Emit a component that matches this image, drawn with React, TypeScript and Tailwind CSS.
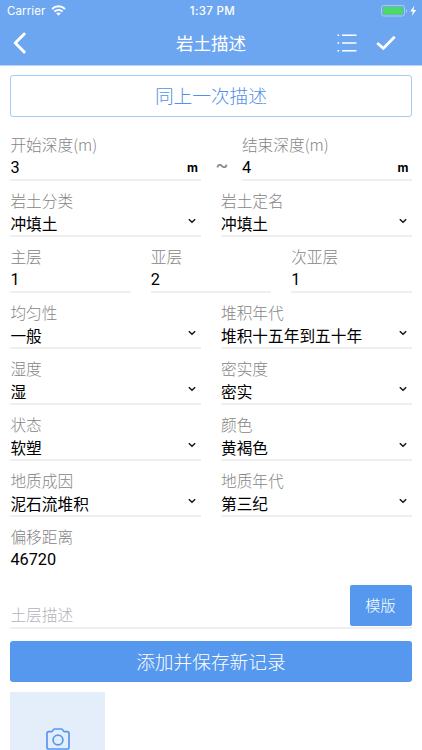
import type { ReactNode } from 'react';
import clsx from 'clsx';

interface FieldProps {
  label: string;
  value: string;
  kind?: 'select' | 'unit' | 'plain';
  numeric?: boolean;
  underline?: boolean;
  className?: string;
}

interface SelectRow {
  left: [string, string];
  right: [string, string];
}

const selectRows: SelectRow[] = [
  { left: ['均匀性', '一般'], right: ['堆积年代', '堆积十五年到五十年'] },
  { left: ['湿度', '湿'], right: ['密实度', '密实'] },
  { left: ['状态', '软塑'], right: ['颜色', '黄褐色'] },
  { left: ['地质成因', '泥石流堆积'], right: ['地质年代', '第三纪'] },
];

function ChevronDown() {
  return (
    <svg width="8" height="6" viewBox="0 0 8 6" fill="none" className="mr-[5px] mb-[7px] shrink-0">
      <path d="M0.8 1.2L4 4.3L7.2 1.2" stroke="#111" strokeWidth="1.4" />
    </svg>
  );
}

function Field({ label, value, kind = 'plain', numeric = false, underline = true, className }: FieldProps) {
  return (
    <div className={clsx('flex h-14 min-w-0 flex-col border-b-2', underline ? 'border-[#efefef]' : 'border-transparent', className)}>
      <span className="mt-[9px] h-[22px] text-[15.7px] leading-[22px] font-light whitespace-nowrap text-[#858585]">{label}</span>
      <div className="mt-px flex h-[22px] items-center justify-between">
        <span
          className={clsx(
            'whitespace-nowrap text-black',
            numeric ? "font-['Roboto',sans-serif] text-[16.3px] leading-[22px]" : 'text-[15.7px] leading-[22px]',
          )}
        >
          {value}
        </span>
        {kind === 'select' && <ChevronDown />}
        {kind === 'unit' && <span className="mr-[3px] font-['Inter',sans-serif] text-[12px] font-bold text-black">m</span>}
      </div>
    </div>
  );
}

function Row({ children }: { children: ReactNode }) {
  return <div className="flex gap-5">{children}</div>;
}

function StatusBar() {
  return (
    <div className="grid h-[22px] grid-cols-3 items-center pr-[5px] pl-[7px] font-['Inter',sans-serif] text-[11.5px] text-white">
      <div className="flex items-center gap-[6px]">
        <span className="pt-[2px] tracking-[0.1px]">Carrier</span>
        <svg width="15" height="11" viewBox="0 0 15 11" fill="none" stroke="white" strokeWidth="2" className="mb-px">
          <path d="M1 3.9C4.8 0.4 10.2 0.4 14 3.9" />
          <path d="M3.4 6.5C5.8 4.4 9.2 4.4 11.6 6.5" />
          <path d="M7.5 10.7L5.2 8.3C6.5 7.1 8.5 7.1 9.8 8.3Z" fill="white" stroke="none" />
        </svg>
      </div>
      <span className="pt-[2px] pr-px pl-[2px] text-center font-medium tracking-[0.35px]">1:37 PM</span>
      <div className="flex items-center justify-end">
        <svg width="36" height="12" viewBox="0 0 36 12" fill="none">
          <rect x="0.5" y="0.5" width="23" height="10.5" rx="2.2" stroke="#a9cbf6" />
          <rect x="2" y="2" width="20" height="7.5" rx="1" fill="#4cd964" />
          <path d="M25 4V8C26.5 7.5 26.5 4.5 25 4Z" fill="#a9cbf6" />
          <path d="M33.3 0.8L29.2 6.5H31.9L30.9 10.8L35.2 4.9H32.5Z" fill="white" />
        </svg>
      </div>
    </div>
  );
}

function NavBar() {
  return (
    <div className="grid h-[43px] grid-cols-3 items-center text-white">
      <svg width="15" height="24" viewBox="0 0 15 24" fill="none" className="mb-px ml-3">
        <path d="M12.2 3L3.2 12L12.2 21" stroke="white" strokeWidth="3" strokeLinecap="round" strokeLinejoin="round" />
      </svg>
      <h1 className="pb-px text-center text-[17.5px] font-normal">岩土描述</h1>
      <div className="flex items-center justify-end gap-[19px] pr-[26px] pb-px">
        <svg width="20" height="20" viewBox="0 0 20 20" stroke="white" strokeWidth="1.5">
          <path d="M0.5 2.2H2.2M5 2.2H19.5M0.5 10H2.2M5 10H19.5M0.5 17.8H2.2M5 17.8H19.5" />
        </svg>
        <svg width="20" height="16" viewBox="0 0 20 16" fill="none">
          <path d="M1.2 8L7.3 13.4L18.7 1.8" stroke="white" strokeWidth="2.8" />
        </svg>
      </div>
    </div>
  );
}

function CameraIcon() {
  return (
    <svg width="24" height="22" viewBox="0 0 24 22" fill="none" stroke="#5598ee" strokeWidth="1.7" strokeLinejoin="round">
      <path d="M2.8 3.7H5.7C6.8 3.7 7.1 1 8.3 1H15.7C16.9 1 17.2 3.7 18.3 3.7H21.2C22.2 3.7 23 4.5 23 5.5V19.2C23 20.2 22.2 21 21.2 21H2.8C1.8 21 1 20.2 1 19.2V5.5C1 4.5 1.8 3.7 2.8 3.7Z" />
      <circle cx="12" cy="12" r="4.9" />
    </svg>
  );
}

export default function App() {
  return (
    <div className="h-[750px] w-[422px] overflow-hidden bg-white font-['Noto_Sans_CJK_SC',sans-serif]">
      <header className="h-[66px] border-b border-[#b5d2f7] bg-[#6da6f0]">
        <StatusBar />
        <NavBar />
      </header>

      <main className="pr-[10.5px] pl-[10.4px]">
        <button className="mt-[9px] flex h-[42px] w-full items-center justify-center rounded-[3px] border border-[#a9c8f3] pb-[2px] text-[18.7px] font-light text-[#5291e7]">
          同上一次描述
        </button>

        <div className="mt-2 flex">
          <Field label="开始深度(m)" value="3" kind="unit" numeric className="w-[190.5px]" />
          <span className="mt-[28px] w-[41px] pl-px text-center font-['Inter',sans-serif] text-[21px] leading-6 text-[#8c8c8c]">~</span>
          <Field label="结束深度(m)" value="4" kind="unit" numeric className="flex-1" />
        </div>

        <Row>
          <Field label="岩土分类" value="冲填土" kind="select" className="flex-1" />
          <Field label="岩土定名" value="冲填土" kind="select" className="flex-1" />
        </Row>

        <Row>
          <Field label="主层" value="1" numeric className="flex-1" />
          <Field label="亚层" value="2" numeric className="flex-1" />
          <Field label="次亚层" value="1" numeric className="flex-1" />
        </Row>

        {selectRows.map(({ left, right }) => (
          <Row key={left[0]}>
            <Field label={left[0]} value={left[1]} kind="select" className="flex-1" />
            <Field label={right[0]} value={right[1]} kind="select" className="flex-1" />
          </Row>
        ))}

        <Field label="偏移距离" value="46720" numeric underline={false} />

        <div className="mt-3 flex h-11 items-start justify-between border-b-2 border-[#efefef]">
          <span className="mt-[19px] text-[15.7px] leading-[22px] font-light text-[#b3b3ba]">土层描述</span>
          <button className="h-[41px] w-[62px] rounded-[2px] bg-[#5598ee] pb-[2px] text-[15.2px] font-light text-white">模版</button>
        </div>

        <button className="mt-3 h-[41px] w-full rounded-[3px] bg-[#5598ee] pb-px text-[18.7px] font-light text-white">
          添加并保存新记录
        </button>

        <div className="mt-[10px] flex h-[95px] w-[95px] justify-center bg-[#e4eefb] pt-9">
          <CameraIcon />
        </div>
      </main>
    </div>
  );
}
